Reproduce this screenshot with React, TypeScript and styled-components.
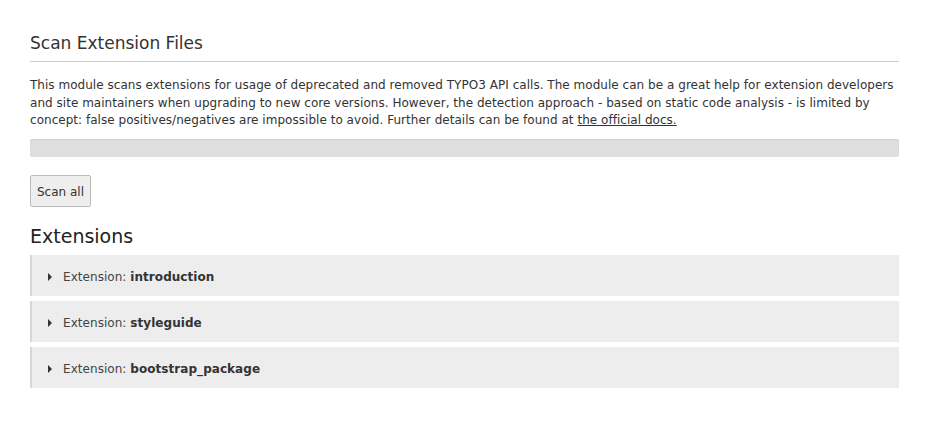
import React from 'react';
import styled, { createGlobalStyle } from 'styled-components';

const extensions = ['introduction', 'styleguide', 'bootstrap_package'];

const GlobalStyle = createGlobalStyle`
  html, body {
    margin: 0;
    padding: 0;
    background: #fff;
  }
  body {
    font-family: 'DejaVu Sans', Verdana, sans-serif;
    font-size: 12px;
    color: #333;
  }
`;

const App: React.FC = () => {
  return (
    <>
      <GlobalStyle />
      <PageWrap>
        <ModuleTitle>Scan Extension Files</ModuleTitle>
        <Intro>
          This module scans extensions for usage of deprecated and removed
          TYPO3 API calls. The module can be a great help for extension
          developers and site maintainers when upgrading to new core versions.
          However, the detection approach - based on static code analysis - is
          limited by concept: false positives/negatives are impossible to
          avoid. Further details can be found at{' '}
          <DocsLink href="#">the official docs.</DocsLink>
        </Intro>
        <ProgressTrack />
        <ScanButton type="button">Scan all</ScanButton>
        <SectionTitle>Extensions</SectionTitle>
        <PanelList>
          {extensions.map((name) => (
            <Panel key={name}>
              <Caret viewBox="0 0 4 8">
                <path d="M0 0 L4 4 L0 8 Z" fill="#333" />
              </Caret>
              <PanelLabel>
                Extension: <strong>{name}</strong>
              </PanelLabel>
            </Panel>
          ))}
        </PanelList>
      </PageWrap>
    </>
  );
};

const PageWrap = styled.div`
  padding: 31px 30px 24px 30px;
  width: 869px;
`;

const ModuleTitle = styled.h1`
  margin: 0;
  font-size: 17px;
  font-weight: normal;
  line-height: 24px;
  color: #333;
  padding-bottom: 6px;
  border-bottom: 1px solid #ccc;
`;

const Intro = styled.p`
  margin: 15px 0 0 0;
  line-height: 17.6px;
  font-size: 12px;
  letter-spacing: 0.03px;
  color: #333;
`;

const DocsLink = styled.a`
  color: #333;
  text-decoration: underline;
`;

const ProgressTrack = styled.div`
  margin-top: 9px;
  height: 18px;
  background-color: #dedede;
  border-radius: 2px;
  box-shadow: inset 0 1px 2px rgba(0, 0, 0, 0.06);
`;

const ScanButton = styled.button`
  display: block;
  margin-top: 18px;
  padding: 7px 6px 5px 6px;
  font-family: 'DejaVu Sans', Verdana, sans-serif;
  font-size: 12px;
  line-height: 18px;
  color: #333;
  background-color: #eeeeee;
  border: 1px solid #bbbbbb;
  border-radius: 2px;
  cursor: pointer;
`;

const SectionTitle = styled.h2`
  margin: 15px 0 5px 0;
  font-size: 19px;
  font-weight: normal;
  line-height: 28px;
  color: #222;
`;

const PanelList = styled.div`
  display: flex;
  flex-direction: column;
  gap: 5px;
`;

const Panel = styled.div`
  display: flex;
  align-items: center;
  gap: 11px;
  height: 41px;
  padding: 3px 0 0 16px;
  background-color: #ededed;
  border-left: 2px solid #d7d7d7;
  box-sizing: border-box;
  cursor: pointer;
`;

const Caret = styled.svg`
  width: 4px;
  height: 8px;
  flex-shrink: 0;
`;

const PanelLabel = styled.span`
  font-size: 12px;
  letter-spacing: 0.05px;
  color: #444;

  strong {
    font-weight: bold;
    color: #333;
  }
`;

export default App;
